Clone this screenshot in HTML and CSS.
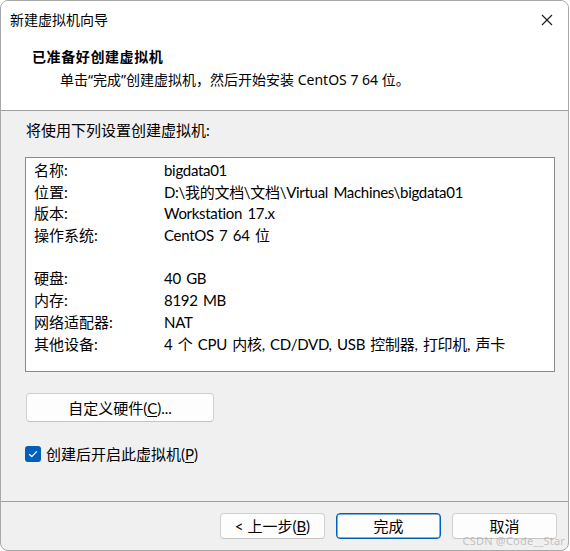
FILE: index.html
```html
<!DOCTYPE html>
<html lang="zh-CN">
<head>
<meta charset="utf-8">
<title>新建虚拟机向导</title>
<link rel="stylesheet" href="styles.css">
</head>
<body>
<div class="window">
  <div class="titlebar">
    <span class="title">新建虚拟机向导</span>
    <span class="close">
      <svg width="12" height="12" viewBox="0 0 12 12"><path d="M1 1 L11 11 M11 1 L1 11" stroke="#1a1a1a" stroke-width="1.1" fill="none"/></svg>
    </span>
  </div>
  <div class="header">
    <div class="heading">已准备好创建虚拟机</div>
    <div class="subheading">单击“完成”创建虚拟机，然后开始安装 CentOS 7 64 位。</div>
  </div>
  <div class="content">
    <div class="intro">将使用下列设置创建虚拟机:</div>
    <div class="summary">
      <div class="row"><span class="label">名称:</span><span class="value">bigdata01</span></div>
      <div class="row"><span class="label">位置:</span><span class="value">D:\我的文档\文档\Virtual Machines\bigdata01</span></div>
      <div class="row"><span class="label">版本:</span><span class="value">Workstation 17.x</span></div>
      <div class="row"><span class="label">操作系统:</span><span class="value">CentOS 7 64 位</span></div>
      <div class="row"></div>
      <div class="row"><span class="label">硬盘:</span><span class="value">40 GB</span></div>
      <div class="row"><span class="label">内存:</span><span class="value">8192 MB</span></div>
      <div class="row"><span class="label">网络适配器:</span><span class="value">NAT</span></div>
      <div class="row"><span class="label">其他设备:</span><span class="value">4 个 CPU 内核, CD/DVD, USB 控制器, 打印机, 声卡</span></div>
    </div>
    <button class="btn btn-custom">自定义硬件(<u>C</u>)...</button>
    <label class="check">
      <span class="box">
        <svg width="10" height="8" viewBox="0 0 10 8"><path d="M1.2 4.2 L3.8 6.6 L8.8 1.4" stroke="#fff" stroke-width="1.3" fill="none"/></svg>
      </span>
      <span>创建后开启此虚拟机(<u>P</u>)</span>
    </label>
  </div>
  <div class="footer">
    <button class="btn">&lt; 上一步(<u>B</u>)</button>
    <button class="btn btn-primary">完成</button>
    <button class="btn">取消</button>
  </div>
  <div class="watermark">CSDN @Code__Star</div>
</div>
</body>
</html>
```
FILE: styles.css
```css
* { box-sizing: border-box; }
html, body { margin: 0; padding: 0; background: #ffffff; }
body {
  font-family: "Noto Sans", "Noto Sans CJK SC", sans-serif;
  font-size: 14px;
  color: #000;
}
.window {
  position: relative;
  width: 569px;
  height: 551px;
  border: 1px solid #a8a8a8;
  border-radius: 8px;
  background: #f0f0f0;
  overflow: hidden;
  display: flex;
  flex-direction: column;
}
.titlebar {
  height: 37px;
  background: #fff;
  display: flex;
  align-items: center;
  justify-content: space-between;
  padding: 0 15px 0 9px;
}
.title { font-size: 14px; line-height: 20px; }
.close { display: flex; width: 12px; height: 12px; }
.header {
  height: 73px;
  background: #fff;
  border-bottom: 1px solid #a0a0a0;
  padding: 9px 0 0 31px;
}
.heading {
  font-weight: bold;
  line-height: 20px;
  letter-spacing: 0.6px;
}
.subheading {
  line-height: 20px;
  margin-top: 3px;
  padding-left: 28px;
}
.content,
.footer {
  font-family: "Lato", "Noto Sans CJK SC", sans-serif;
  font-size: 15px;
}
.content {
  flex: 1;
  padding: 9px 13px 0 24px;
  border-bottom: 1px solid #a0a0a0;
}
.intro { line-height: 20px; padding-left: 1px; }
.summary {
  margin-top: 17px;
  width: 530px;
  height: 215px;
  background: #fff;
  border: 1px solid #888a8c;
  padding: 2px 0 0 8px;
}
.row {
  display: flex;
  height: 21.7px;
  line-height: 21.7px;
}
.label { width: 130px; flex: none; }
.value {
  letter-spacing: -0.3px;
  word-spacing: 1.8px;
}
.btn {
  font-family: inherit;
  font-size: 15px;
  color: #000;
  background: #fdfdfd;
  border: 1px solid #d0d0d0;
  border-bottom-color: #c4c4c4;
  border-radius: 4px;
  padding: 0;
  height: 26px;
  width: 105px;
  line-height: 22px;
}
.btn u { text-underline-offset: 2px; }
.btn-custom {
  display: block;
  margin-top: 21px;
  margin-left: 1px;
  width: 188px;
  height: 29px;
}
.check {
  display: flex;
  align-items: center;
  gap: 5px;
  margin-top: 22px;
  line-height: 20px;
}
.check u { text-underline-offset: 2px; }
.box {
  width: 16px;
  height: 16px;
  border-radius: 3px;
  background: #005fb8;
  display: flex;
  align-items: center;
  justify-content: center;
}
.footer {
  height: 48px;
  display: flex;
  justify-content: flex-end;
  gap: 11px;
  padding: 11px 11px 0 0;
}
.btn-primary {
  border: 1px solid #005fb8;
  box-shadow: inset 0 0 0 0.5px #005fb8;
}
.watermark {
  position: absolute;
  right: 3px;
  bottom: 2px;
  font-family: "Noto Sans", sans-serif;
  font-size: 11px;
  color: rgba(150, 150, 150, 0.55);
  letter-spacing: 0.2px;
}
```
